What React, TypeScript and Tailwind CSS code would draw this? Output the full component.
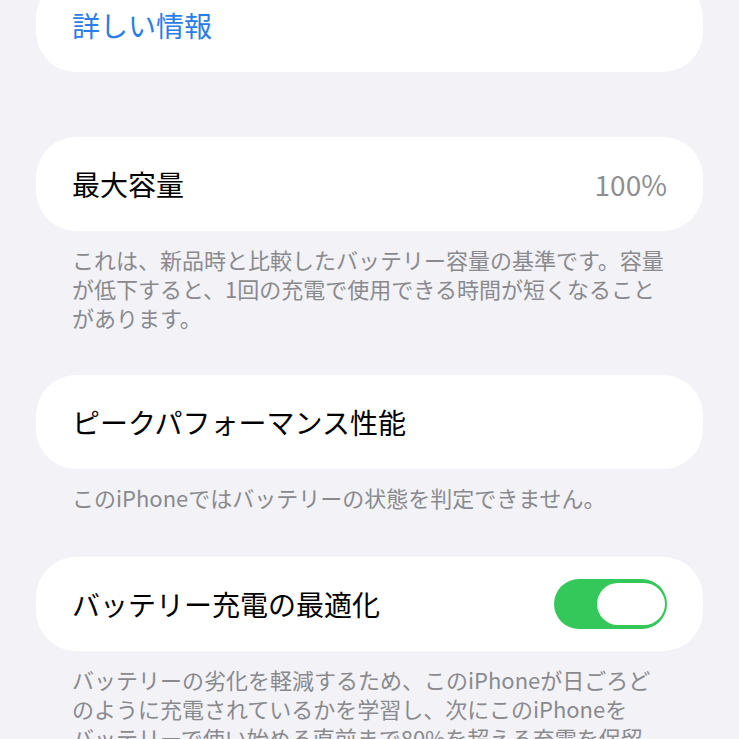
const jp = { fontFamily: '"Noto Sans CJK JP", "Noto Sans", sans-serif' };

function Card({ children, className = '' }: { children: React.ReactNode; className?: string }) {
  return (
    <div className={`flex items-center justify-between bg-white rounded-[40px] h-[94px] pl-9 pr-9 ${className}`}>
      {children}
    </div>
  );
}

function Footer({ lines }: { lines: string[] }) {
  return (
    <div className="px-9 pt-[14px] text-[22px] leading-[29px] text-[#8a8a8e] whitespace-nowrap">
      {lines.map((l) => (
        <p key={l}>{l}</p>
      ))}
    </div>
  );
}

export default function App() {
  return (
    <div className="h-[739px] overflow-hidden bg-[#f2f2f7] px-9" style={jp}>
      <Card className="-mt-[22px]">
        <span className="text-[28px] text-[#2a7de8]">詳しい情報</span>
      </Card>

      <Card className="mt-[65px]">
        <span className="text-[28px] text-black">最大容量</span>
        <span className="text-[28px] text-[#8e8e93]">100%</span>
      </Card>
      <Footer
        lines={[
          'これは、新品時と比較したバッテリー容量の基準です。容量',
          'が低下すると、1回の充電で使用できる時間が短くなること',
          'があります。',
        ]}
      />

      <Card className="mt-[43px]">
        <span className="text-[28px] text-black">ピークパフォーマンス性能</span>
      </Card>
      <Footer lines={['このiPhoneではバッテリーの状態を判定できません。']} />

      <Card className="mt-[45px] h-[93px]">
        <span className="text-[28px] text-black">バッテリー充電の最適化</span>
        <div className="relative w-[113px] h-[50px] rounded-full bg-[#34c759]">
          <div className="absolute right-[2px] top-[4px] w-[68px] h-[42px] rounded-full bg-white" />
        </div>
      </Card>
      <Footer
        lines={[
          'バッテリーの劣化を軽減するため、このiPhoneが日ごろど',
          'のように充電されているかを学習し、次にこのiPhoneを',
          'バッテリーで使い始める直前まで80%を超える充電を保留',
        ]}
      />
    </div>
  );
}
